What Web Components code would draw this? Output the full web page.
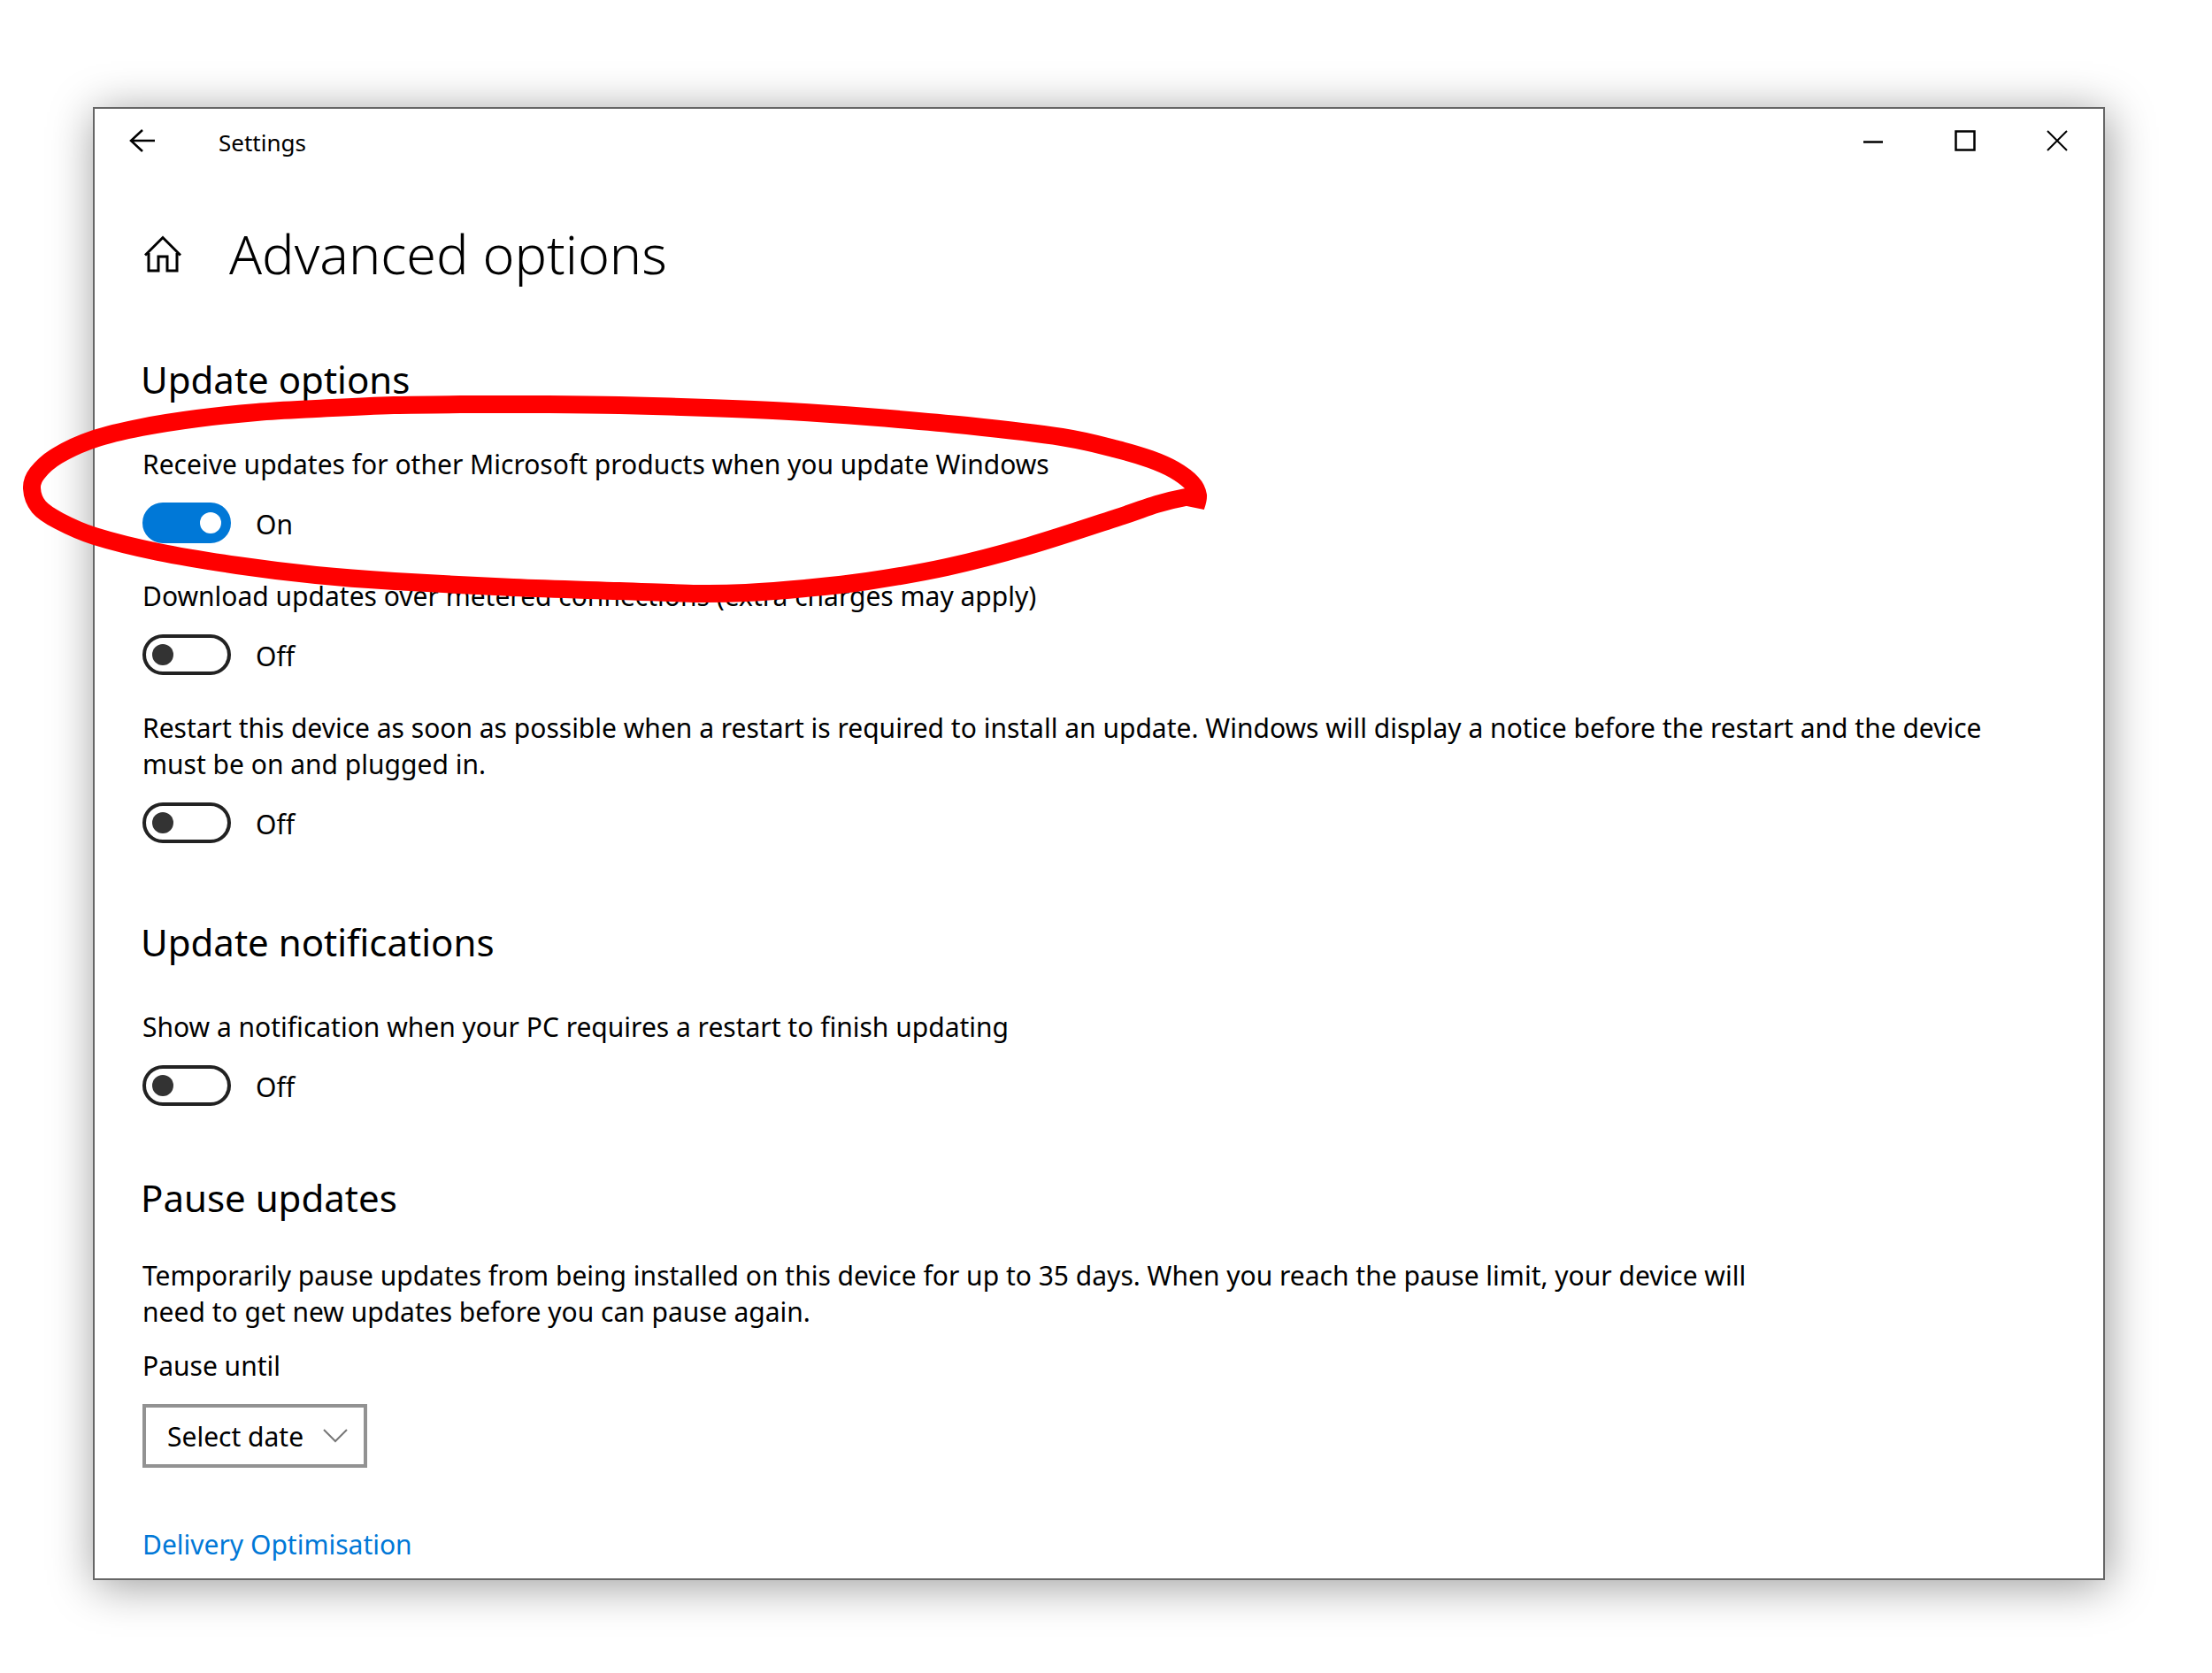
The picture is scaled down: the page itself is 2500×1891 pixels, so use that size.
<!DOCTYPE html>
<html lang="en-GB">
<head>
<meta charset="utf-8">
<meta name="viewport" content="width=device-width, initial-scale=1">
<title>Settings</title>
<style>
    body {
        margin: 0;
        background: #fff;
        color: #000;
        font-family: 'Noto Sans', 'Open Sans', sans-serif;
        font-size: 30px;
        line-height: 41px;
    }
</style>
</head>
<body>

<settings-page>
    <settings-window name="Settings">
        <page-title>Advanced options</page-title>

        <settings-group heading="Update options">
            <toggle-setting checked>Receive updates for other Microsoft products when you update Windows</toggle-setting>
            <toggle-setting>Download updates over metered connections (extra charges may apply)</toggle-setting>
            <toggle-setting>Restart this device as soon as possible when a restart is required to install an update. Windows will display a notice before the restart and the device must be on and plugged in.</toggle-setting>
        </settings-group>

        <settings-group heading="Update notifications">
            <toggle-setting>Show a notification when your PC requires a restart to finish updating</toggle-setting>
        </settings-group>

        <settings-group heading="Pause updates" compact>
            <pause-setting label="Pause until" placeholder="Select date">Temporarily pause updates from being installed on this device for up to 35 days. When you reach the pause limit, your device will need to get new updates before you can pause again.</pause-setting>
        </settings-group>

        <settings-link href="#delivery">Delivery Optimisation</settings-link>
    </settings-window>

    <marker-ring slot="overlay"></marker-ring>
</settings-page>

<script>
// small helper, every element below clones its own template
function attach(el, html) {
    const template = document.createElement('template');
    template.innerHTML = html;
    const shadow = el.attachShadow({mode: 'open'});
    shadow.appendChild(template.content.cloneNode(true));
    return shadow;
}

class SettingsPage extends HTMLElement {
    constructor() {
        super();
        attach(this, `
<style>
    :host {
        display: block;
        position: relative;
        padding: 121px 121px 104px 105px;
    }
</style>
<slot></slot>
<slot name="overlay"></slot>
`);
    }
}

class SettingsWindow extends HTMLElement {
    constructor() {
        super();
        const shadow = attach(this, `
<style>
    :host {
        display: block;
        background: #fff;
        border: 2px solid #666;
        box-shadow: 3px 6px 48px rgba(0, 0, 0, .4);
    }
    header {
        display: flex;
        height: 72px;
        align-items: stretch;
    }
    button {
        display: grid;
        place-items: center;
        box-sizing: border-box;
        width: 104px;
        padding: 0;
        border: 0;
        background: none;
        color: inherit;
        cursor: pointer;
    }
    button:hover {
        background: #e5e5e5;
    }
    .back {
        padding-left: 4px;
    }
    .name {
        flex: 1;
        padding-left: 36px;
        font-size: 26px;
        line-height: 76px;
    }
    svg {
        display: block;
        fill: none;
        stroke: #000;
        stroke-width: 2.500;
    }
    main {
        padding: 62px 70px 18px 52px;
    }
</style>
<header>
    <button class="back" type="button" aria-label="Back">
        <svg width="30" height="26" viewBox="0 0 30 26"><path d="M29 13H3M15 1L2 13l13 12"/></svg>
    </button>
    <span class="name"></span>
    <button type="button" aria-label="Minimise">
        <svg width="24" height="24" viewBox="0 0 24 24"><path d="M1 13.500h22"/></svg>
    </button>
    <button type="button" aria-label="Maximise">
        <svg width="24" height="24" viewBox="0 0 24 24"><path d="M1.500 1.500h21v21h-21z"/></svg>
    </button>
    <button type="button" aria-label="Close">
        <svg width="24" height="24" viewBox="0 0 24 24"><path d="M1 1l22 22M23 1L1 23" stroke-width="2"/></svg>
    </button>
</header>
<main><slot></slot></main>
`);
        shadow.querySelector('.name').textContent = this.getAttribute('name');
    }
}

class PageTitle extends HTMLElement {
    constructor() {
        super();
        attach(this, `
<style>
    :host {
        display: flex;
        align-items: center;
        gap: 54px;
    }
    a {
        display: block;
        padding-left: 4px;
        color: #000;
    }
    svg {
        display: block;
        fill: none;
        stroke: currentColor;
        stroke-width: 3;
    }
    h1 {
        margin: 0;
        font-size: 61px;
        font-weight: 300;
        line-height: 60px;
    }
</style>
<a href="#home" aria-label="Home">
    <svg width="42" height="42" viewBox="0 0 42 42"><path d="M1 22.500L21 2.500l20 20M5 20v20h11V24h10v16h11V20"/></svg>
</a>
<h1><slot></slot></h1>
`);
    }
}

class SettingsGroup extends HTMLElement {
    constructor() {
        super();
        const shadow = attach(this, `
<style>
    :host {
        display: block;
        margin-top: 82px;
    }
    h2 {
        margin: 0 0 45px;
        font-size: 42px;
        font-weight: 400;
        line-height: 60px;
    }
    :host([compact]) {
        margin-top: 74px;
    }
    :host([compact]) h2 {
        margin-bottom: 37px;
    }
    .items {
        display: flex;
        flex-direction: column;
        gap: 39px;
        padding-left: 2px;
    }
</style>
<section>
    <h2></h2>
    <div class="items"><slot></slot></div>
</section>
`);
        shadow.querySelector('h2').textContent = this.getAttribute('heading');
    }
}

class ToggleSetting extends HTMLElement {
    constructor() {
        super();
        const shadow = attach(this, `
<style>
    :host {
        display: block;
    }
    label {
        display: block;
    }
    .row {
        display: flex;
        align-items: center;
        gap: 28px;
        margin-top: 23px;
    }
    input {
        appearance: none;
        display: flex;
        align-items: center;
        box-sizing: border-box;
        width: 100px;
        height: 46px;
        margin: 0;
        padding: 0 7px;
        border: 4px solid #222;
        border-radius: 23px;
        background: #fff;
        cursor: pointer;
    }
    input::before {
        content: '';
        width: 24px;
        height: 24px;
        border-radius: 50%;
        background: #333;
    }
    input:checked {
        justify-content: flex-end;
        border-color: #0078d7;
        background: #0078d7;
    }
    input:checked::before {
        background: #fff;
    }
    .state {
        padding-top: 3px;
    }
</style>
<label for="toggle"><slot></slot></label>
<div class="row">
    <input id="toggle" type="checkbox" role="switch">
    <span class="state"></span>
</div>
`);
        this.input = shadow.querySelector('input');
        this.state = shadow.querySelector('.state');
        this.input.checked = this.hasAttribute('checked');
        this.showState();
    }
    showState() {
        this.state.textContent = this.input.checked ? 'On' : 'Off';
    }
    connectedCallback() {
        this.input.addEventListener('change', () => this.showState());
    }
}

class PauseSetting extends HTMLElement {
    constructor() {
        super();
        const shadow = attach(this, `
<style>
    :host {
        display: block;
    }
    p {
        max-width: 1840px;
        margin: 0 0 20px;
    }
    label {
        display: block;
        margin-bottom: 23px;
    }
    .box {
        display: inline-grid;
        align-items: center;
    }
    select, svg {
        grid-area: 1 / 1;
    }
    select {
        appearance: none;
        height: 72px;
        width: 254px;
        padding: 0 60px 0 24px;
        border: 4px solid #929292;
        border-radius: 0;
        background: #fff;
        color: inherit;
        font: inherit;
    }
    svg {
        justify-self: end;
        margin-right: 22px;
        fill: none;
        stroke: #777;
        stroke-width: 2;
        pointer-events: none;
    }
</style>
<p><slot></slot></p>
<label for="date"></label>
<div class="box">
    <select id="date"><option></option></select>
    <svg width="28" height="16" viewBox="0 0 28 16"><path d="M1 1l13 13L27 1"/></svg>
</div>
`);
        shadow.querySelector('label').textContent = this.getAttribute('label');
        shadow.querySelector('option').textContent = this.getAttribute('placeholder');
    }
}

class SettingsLink extends HTMLElement {
    constructor() {
        super();
        const shadow = attach(this, `
<style>
    :host {
        display: block;
        margin-top: 66px;
        padding-left: 2px;
    }
    a {
        color: #0078d7;
        text-decoration: none;
    }
</style>
<a><slot></slot></a>
`);
        shadow.querySelector('a').href = this.getAttribute('href');
    }
}

// hand drawn red loop round the first setting
const ringPoints = [
    [1351, 574], [1354, 560], [1347, 546], [1327, 531], [1300, 519], [1263, 508],
    [1200, 494], [1093, 481], [980, 471], [892, 465], [800, 461], [700, 458],
    [620, 457], [536, 457], [445, 458], [357, 462], [290, 466], [223, 473],
    [160, 483], [107, 496], [65, 515], [42, 535], [36, 552], [44, 573],
    [67, 589], [107, 606], [179, 624], [268, 639], [357, 650], [446, 657],
    [580, 664], [700, 668], [789, 671], [843, 670], [910, 665], [980, 657],
    [1070, 641], [1163, 617], [1263, 585], [1307, 570], [1340, 562], [1350, 562]
];

// curve that passes through every point
function smoothPath(points) {
    let d = `M${points[0]}`;
    for (let i = 0; i < points.length - 1; i++) {
        const p0 = points[i - 1] || points[i];
        const p1 = points[i];
        const p2 = points[i + 1];
        const p3 = points[i + 2] || p2;
        const c1 = [p1[0] + (p2[0] - p0[0]) / 6, p1[1] + (p2[1] - p0[1]) / 6];
        const c2 = [p2[0] - (p3[0] - p1[0]) / 6, p2[1] - (p3[1] - p1[1]) / 6];
        d += `C${c1} ${c2} ${p2}`;
    }
    return d;
}

class MarkerRing extends HTMLElement {
    constructor() {
        super();
        const shadow = attach(this, `
<style>
    :host {
        position: absolute;
        left: 20px;
        top: 440px;
        pointer-events: none;
    }
    svg {
        display: block;
        fill: none;
        stroke: #f00;
        stroke-width: 20;
    }
</style>
<svg width="1350" height="250" viewBox="20 440 1350 250" aria-hidden="true"><path/></svg>
`);
        shadow.querySelector('path').setAttribute('d', smoothPath(ringPoints));
    }
}

customElements.define('settings-page', SettingsPage);
customElements.define('settings-window', SettingsWindow);
customElements.define('page-title', PageTitle);
customElements.define('settings-group', SettingsGroup);
customElements.define('toggle-setting', ToggleSetting);
customElements.define('pause-setting', PauseSetting);
customElements.define('settings-link', SettingsLink);
customElements.define('marker-ring', MarkerRing);
</script>
</body>
</html>
